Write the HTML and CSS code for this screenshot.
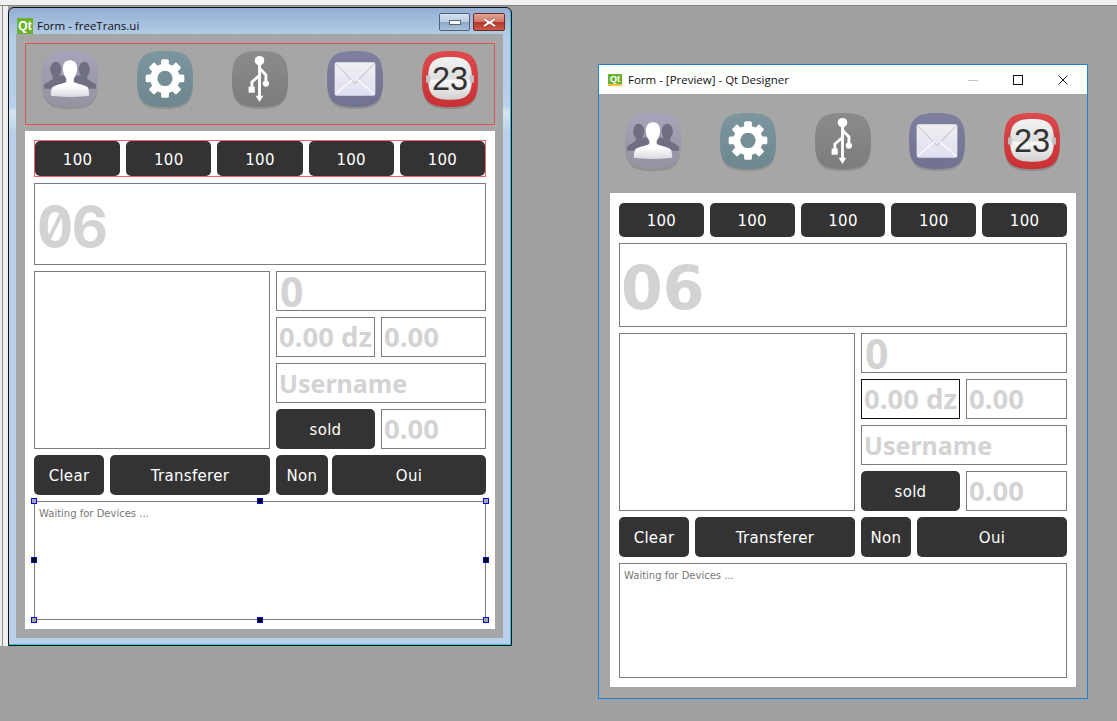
FILE: index.html
```html
<!DOCTYPE html>
<html lang="fr">
<head>
    <meta charset="UTF-8">
    <meta name="viewport" content="width=device-width, initial-scale=1.0">
    <title>Form - freeTrans.ui</title>
    <link rel="stylesheet" href="styles.css">
</head>
<body>
    <svg class="defs" width="0" height="0">
        <defs>
            <linearGradient id="g-contacts" x1="0" y1="0" x2="0" y2="1"><stop offset="0" stop-color="#a5a4ba"/><stop offset="1" stop-color="#94939f"/></linearGradient>
            <linearGradient id="g-settings" x1="0" y1="0" x2="0" y2="1"><stop offset="0" stop-color="#7b969e"/><stop offset="1" stop-color="#6c878e"/></linearGradient>
            <linearGradient id="g-usb" x1="0" y1="0" x2="0" y2="1"><stop offset="0" stop-color="#8b8b8b"/><stop offset="1" stop-color="#7c7c7c"/></linearGradient>
            <linearGradient id="g-mail" x1="0" y1="0" x2="0" y2="1"><stop offset="0" stop-color="#7f7f9f"/><stop offset="1" stop-color="#717192"/></linearGradient>
            <linearGradient id="g-cal" x1="0" y1="0" x2="0" y2="1"><stop offset="0" stop-color="#dc4a4c"/><stop offset="1" stop-color="#c93134"/></linearGradient>
            <linearGradient id="g-white" x1="0" y1="0" x2="0" y2="1"><stop offset="0" stop-color="#fff"/><stop offset=".7" stop-color="#fff"/><stop offset="1" stop-color="#d8d8e0"/></linearGradient>
            <linearGradient id="g-flap" x1="0" y1="0" x2="0" y2="1"><stop offset="0" stop-color="#f4f4f4"/><stop offset=".52" stop-color="#dedede"/><stop offset=".53" stop-color="#fafafa"/><stop offset="1" stop-color="#d0d0d0"/></linearGradient>
            <linearGradient id="g-letter" x1="0" y1="0" x2="0" y2="1"><stop offset="0" stop-color="#f0f0f0"/><stop offset="1" stop-color="#dfdff2"/></linearGradient>
            <path id="squircle" d="M28.500 1C50 1 56 7 56 28.500S50 56 28.500 56 1 50 1 28.500 7 1 28.500 1Z"/>

            <symbol id="ico-contacts" viewBox="0 0 57 58">
                <use href="#squircle" y="2" fill="#000" opacity=".12"/>
                <use href="#squircle" fill="url(#g-contacts)"/>
                <g fill="#6f6e83">
                    <ellipse cx="14.500" cy="19" rx="5.500" ry="7.500"/>
                    <ellipse cx="42.500" cy="19" rx="5.500" ry="7.500"/>
                    <path d="M11.500 25v3.500L3 34v4h25V25Z"/>
                    <path d="M45.500 25v3.500L54 34v4H29V25Z"/>
                </g>
                <path d="M28.500 8.500c-5.500 0-8 4-8 9 0 4.500 1.700 7.500 4 10.500v3.500c-3 2-12 3-14 5.500-1 1.500-1.200 5-1.300 8 11 1.500 27.600 1.500 38.600 0-.1-3-.3-6.500-1.300-8-2-2.500-11-3.500-14-5.500V28c2.300-3 4-6 4-10.500 0-5-2.500-9-8-9Z" fill="#a5a4ba"/>
                <path d="M28.500 10c-5 0-7 4-7 8.500 0 4 1.500 7 3.500 9.500v3.500c-3 2-12 3-14 5.500-1 1.500-1.200 5-1.300 8 11 1.500 26.600 1.500 37.600 0-.1-3-.3-6.500-1.300-8-2-2.500-11-3.500-14-5.500V28c2-2.500 3.500-5.500 3.500-9.500 0-4.500-2-8.500-7-8.500Z" fill="url(#g-white)"/>
            </symbol>

            <symbol id="ico-settings" viewBox="0 0 57 58">
                <use href="#squircle" y="2" fill="#000" opacity=".12"/>
                <use href="#squircle" fill="url(#g-settings)"/>
                <g fill="#fff">
                    <circle cx="28.500" cy="28" r="14.500"/>
                    <rect x="24.700" y="9" width="7.600" height="38" rx="1.500"/>
                    <rect x="24.700" y="9" width="7.600" height="38" rx="1.500" transform="rotate(45 28.500 28)"/>
                    <rect x="24.700" y="9" width="7.600" height="38" rx="1.500" transform="rotate(90 28.500 28)"/>
                    <rect x="24.700" y="9" width="7.600" height="38" rx="1.500" transform="rotate(135 28.500 28)"/>
                </g>
                <circle cx="28.500" cy="28" r="7.500" fill="#748f96"/>
            </symbol>

            <symbol id="ico-usb" viewBox="0 0 57 58">
                <use href="#squircle" y="2" fill="#000" opacity=".12"/>
                <use href="#squircle" fill="url(#g-usb)"/>
                <circle cx="28" cy="10.500" r="4.700" fill="#fff"/>
                <path d="M28 12V46M28 18l6.300 6.500V32M28 25l-7.500 6.500V38" fill="none" stroke="#fff" stroke-width="2.800"/>
                <circle cx="34.300" cy="33" r="3.100" fill="#fff"/>
                <rect x="17.300" y="36" width="6" height="6" fill="#fff"/>
                <path d="M24.200 45h7.600L28 51Z" fill="#fff"/>
            </symbol>

            <symbol id="ico-mail" viewBox="0 0 57 58">
                <use href="#squircle" y="2" fill="#000" opacity=".12"/>
                <use href="#squircle" fill="url(#g-mail)"/>
                <rect x="8.500" y="12" width="40" height="33" rx="2" fill="url(#g-letter)"/>
                <path d="M9.500 13.500 28.500 33 47.500 13.500" fill="none" stroke="#c4c4cc" stroke-width="1"/>
                <path d="M9.500 43.500 26 29M47.500 43.500 31 29" fill="none" stroke="#fff" stroke-width="1"/>
            </symbol>

            <symbol id="ico-calendar" viewBox="0 0 57 58">
                <use href="#squircle" y="2" fill="#000" opacity=".15"/>
                <use href="#squircle" fill="url(#g-cal)"/>
                <path d="M28.500 7C45 7 50 12 50 28S45 49 28.500 49 7 44 7 28 12 7 28.500 7Z" fill="url(#g-flap)"/>
                <rect x="5" y="25" width="4" height="7" fill="#c4c4c4"/>
                <rect x="48" y="25" width="4" height="7" fill="#c4c4c4"/>
                <text x="28.500" y="39" text-anchor="middle" class="cal-num">23</text>
            </symbol>
        </defs>
    </svg>

    <div class="top-strip"></div>
    <div class="side-strip"></div>

    <!-- designer window -->
    <section class="window win-designer">
        <header class="aero-title">
            <span class="qt-logo">Qt</span>
            <span class="title-text">Form - freeTrans.ui</span>
            <div class="aero-buttons">
                <span class="aero-min"><i></i></span>
                <span class="aero-close">
                    <svg width="15" height="11" viewBox="0 0 15 11"><path d="M2.500 1 7.500 4 12.500 1 14 2.500 10 5.500 14 8.500 12.500 10 7.500 7 2.500 10 1 8.500 5 5.500 1 2.500Z" fill="#fff" stroke="#6d2a22" stroke-width=".5"/></svg>
                </span>
            </div>
        </header>
        <div class="form form-designer">
            <div class="icons-bar icons-outlined">
                <svg class="icon"><use href="#ico-contacts"/></svg>
                <svg class="icon"><use href="#ico-settings"/></svg>
                <svg class="icon"><use href="#ico-usb"/></svg>
                <svg class="icon"><use href="#ico-mail"/></svg>
                <svg class="icon"><use href="#ico-calendar"/></svg>
            </div>
            <div class="panel">
                <div class="amounts amounts-outlined">
                    <button class="btn">100</button>
                    <button class="btn">100</button>
                    <button class="btn">100</button>
                    <button class="btn">100</button>
                    <button class="btn">100</button>
                </div>
                <div class="box lcd lcd-mono">06</div>
                <div class="middle">
                    <div class="box"></div>
                    <div class="fields">
                        <div class="box f-zero">0</div>
                        <div class="pair">
                            <div class="box f-num">0.00 dz</div>
                            <div class="box f-num">0.00</div>
                        </div>
                        <div class="box f-user">Username</div>
                        <div class="pair">
                            <button class="btn">sold</button>
                            <div class="box f-num">0.00</div>
                        </div>
                    </div>
                </div>
                <div class="actions">
                    <div class="actions-left">
                        <button class="btn">Clear</button>
                        <button class="btn">Transferer</button>
                    </div>
                    <div class="actions-right">
                        <button class="btn">Non</button>
                        <button class="btn">Oui</button>
                    </div>
                </div>
                <div class="box log log-designer">
                    Waiting for Devices ...
                    <i class="handle h-tl off"></i><i class="handle h-tc"></i><i class="handle h-tr off"></i>
                    <i class="handle h-ml"></i><i class="handle h-mr"></i>
                    <i class="handle h-bl off"></i><i class="handle h-bc"></i><i class="handle h-br off"></i>
                </div>
            </div>
        </div>
    </section>

    <!-- preview window -->
    <section class="window win-preview">
        <header class="flat-title">
            <span class="qt-logo-flat">Qt</span>
            <span class="title-text">Form - [Preview] - Qt Designer</span>
            <div class="flat-buttons">
                <svg width="12" height="12" viewBox="0 0 12 12"><path d="M1 6.500H11" stroke="#c4c4c4"/></svg>
                <svg width="12" height="12" viewBox="0 0 12 12"><rect x="1.500" y="1.500" width="9" height="9" fill="none" stroke="#111"/></svg>
                <svg width="12" height="12" viewBox="0 0 12 12"><path d="M1.500 1.500 10.500 10.500M10.500 1.500 1.500 10.500" stroke="#111"/></svg>
            </div>
        </header>
        <div class="form form-preview">
            <div class="icons-bar">
                <svg class="icon"><use href="#ico-contacts"/></svg>
                <svg class="icon"><use href="#ico-settings"/></svg>
                <svg class="icon"><use href="#ico-usb"/></svg>
                <svg class="icon"><use href="#ico-mail"/></svg>
                <svg class="icon"><use href="#ico-calendar"/></svg>
            </div>
            <div class="panel">
                <div class="amounts">
                    <button class="btn">100</button>
                    <button class="btn">100</button>
                    <button class="btn">100</button>
                    <button class="btn">100</button>
                    <button class="btn">100</button>
                </div>
                <div class="box lcd">06</div>
                <div class="middle">
                    <div class="box"></div>
                    <div class="fields">
                        <div class="box f-zero">0</div>
                        <div class="pair">
                            <div class="box f-num focused">0.00 dz</div>
                            <div class="box f-num">0.00</div>
                        </div>
                        <div class="box f-user">Username</div>
                        <div class="pair">
                            <button class="btn">sold</button>
                            <div class="box f-num">0.00</div>
                        </div>
                    </div>
                </div>
                <div class="actions">
                    <div class="actions-left">
                        <button class="btn">Clear</button>
                        <button class="btn">Transferer</button>
                    </div>
                    <div class="actions-right">
                        <button class="btn">Non</button>
                        <button class="btn">Oui</button>
                    </div>
                </div>
                <div class="box log">Waiting for Devices ...</div>
            </div>
        </div>
    </section>
</body>
</html>
```

FILE: styles.css
```css
html,body{margin:0;height:100%}
body{background:#a0a0a0;font-family:"DejaVu Sans",sans-serif;overflow:hidden;position:relative}
.defs{position:absolute}
.cal-num{font-family:"Liberation Sans",sans-serif;font-size:32px;fill:#333}

.top-strip{position:absolute;left:0;top:0;width:100%;height:5px;background:#f0f0f0;border-bottom:1px solid #838688}
.side-strip{position:absolute;left:0;top:6px;width:8px;height:640px;background:linear-gradient(90deg,#ececec 2px,#8c8c8c 2px,#8c8c8c 3px,#f0f0f0 3px)}

/* windows sit on the desktop */
.window{position:absolute;box-sizing:border-box}
.win-designer{left:8px;top:7px;width:504px;height:639px;border:1px solid #111;border-radius:6px 6px 0 0;background:linear-gradient(#93aed2 0,#b4cde8 28px,#b8d0ea 98px,#d6e6f4 104px,#b8d0e9 125px);box-shadow:inset -1px -1px 0 #27c3e6}
.win-preview{left:598px;top:64px;width:490px;height:635px;border:1px solid #1883d7;background:#a6a6a6}

.aero-title{display:flex;align-items:center;box-sizing:border-box;height:26px;padding:9px 0 0 8px;gap:4px}
.qt-logo{width:16px;height:16px;background:#6ab42d;color:#fff;font:bold 12px/16px "Liberation Sans",sans-serif;text-align:center}
.title-text{font:11.500px "Open Sans",sans-serif;color:#111}
.aero-buttons{display:flex;align-self:flex-start;margin:-4px 6px 0 auto;gap:3px}
.aero-min,.aero-close{display:flex;align-items:center;justify-content:center;height:16px;border:1px solid #4d6076;border-radius:2px}
.aero-min{width:29px;background:linear-gradient(#d6e2f0 0,#b8cbe0 50%,#8ea7c4 52%,#aac3dc 100%)}
.aero-min i{width:10px;height:3px;background:#fff;border:1px solid #55677c}
.aero-close{width:30px;border-color:#6d2a22;background:linear-gradient(#e3a497 0,#cf7564 50%,#b7372a 52%,#cc5a48 100%)}

.form{box-sizing:border-box;background-color:#a6a6a6}
.form-designer{width:487px;height:604px;margin-left:7px;padding:9px;background-image:radial-gradient(circle,#9a9a9a .5px,transparent .8px);background-size:10px 10px}
.form-preview{height:604px;padding:0 11px}

.icons-bar{display:flex;justify-content:space-between;box-sizing:border-box}
.icons-outlined{width:470px;height:82px;margin-bottom:6px;padding:6px 15px 0 15px;border:1px solid #d8565a}
.form-preview .icons-bar{padding:18px 15px 0 14px;height:99px}
.icon{width:58px;height:59px;display:block}

.panel{background:#fff;box-sizing:border-box;display:flex;flex-direction:column;gap:6px}
.form-designer .panel{width:470px;height:498px;padding:9px}
.form-preview .panel{width:466px;height:494px;padding:10px 9px 9px}

.amounts{display:grid;grid-template-columns:repeat(5,1fr);column-gap:6px}
.form-preview .amounts{height:34px}
.form-designer .amounts{height:37px;box-sizing:border-box}
.amounts-outlined{border:1px solid #f0646a}

.btn{background:#333;color:#fff;border:0;border-radius:5px;font:15px "DejaVu Sans",sans-serif;letter-spacing:.3px;padding:2px 0 0;min-width:0;height:100%}

.box{border:1px solid #7c7c7c;box-sizing:border-box;background:#fff;color:#d3d3d3;font-family:"Noto Sans",sans-serif;font-weight:bold;white-space:nowrap;overflow:hidden;padding-left:2px}
.focused{border-color:#111}

.lcd{font-family:"DejaVu Sans",sans-serif;font-size:60px;display:flex;align-items:center;padding-left:1px;padding-top:5px}
.form-designer .lcd{height:82px}
.form-preview .lcd{height:84px}
.lcd-mono{font-family:"Inter",sans-serif;font-feature-settings:"zero","tnum";font-size:56px;letter-spacing:-1.500px;padding-left:2px}

.middle{display:grid;grid-template-columns:236px 1fr;column-gap:6px;height:178px}
.fields{display:grid;grid-template-rows:repeat(4,40px);row-gap:6px}
.pair{display:grid;column-gap:6px}
.form-designer .pair{grid-template-columns:99px 105px}
.form-preview .pair{grid-template-columns:99px 101px}

.f-zero{font-size:41px;line-height:37px;padding:1px 0 0 3px;overflow:visible}
.f-num{font-size:27.500px;line-height:38px}
.f-user{font-size:25px;line-height:38px}

.actions{display:grid;grid-template-columns:236px 1fr;column-gap:6px;height:40px}
.actions-left{display:grid;grid-template-columns:70px 160px;column-gap:6px}
.actions-right{display:grid;column-gap:4px;grid-template-columns:52px 154px}
.form-preview .actions-right{grid-template-columns:50px 150px;column-gap:6px}

.log{position:relative;flex:1;color:#777;font-family:"DejaVu Sans",sans-serif;font-weight:normal;font-size:10px;padding:6px 4px;overflow:visible}
.form-designer .log{height:119px;flex:none}

/* selection handles from the designer */
.handle{position:absolute;width:4px;height:4px;background:#000;border:1px solid #00f}
.handle.off{background:#a6a6a6}
.h-tl{left:-4px;top:-4px}
.h-tc{left:222px;top:-4px}
.h-tr{right:-4px;top:-4px}
.h-ml{left:-4px;top:55px}
.h-mr{right:-4px;top:55px}
.h-bl{left:-4px;bottom:-4px}
.h-bc{left:222px;bottom:-4px}
.h-br{right:-4px;bottom:-4px}

.flat-title{display:flex;align-items:center;height:29px;background:#fff;padding-left:9px;gap:6px}
.qt-logo-flat{width:14px;height:12px;background:#6ab42d;color:#fff;font:bold 9px/10px "Liberation Sans",sans-serif;text-align:center;border-bottom:2px solid #f0c040;box-sizing:border-box}
.flat-buttons{display:flex;gap:33px;margin-left:auto;margin-right:18px}
```
